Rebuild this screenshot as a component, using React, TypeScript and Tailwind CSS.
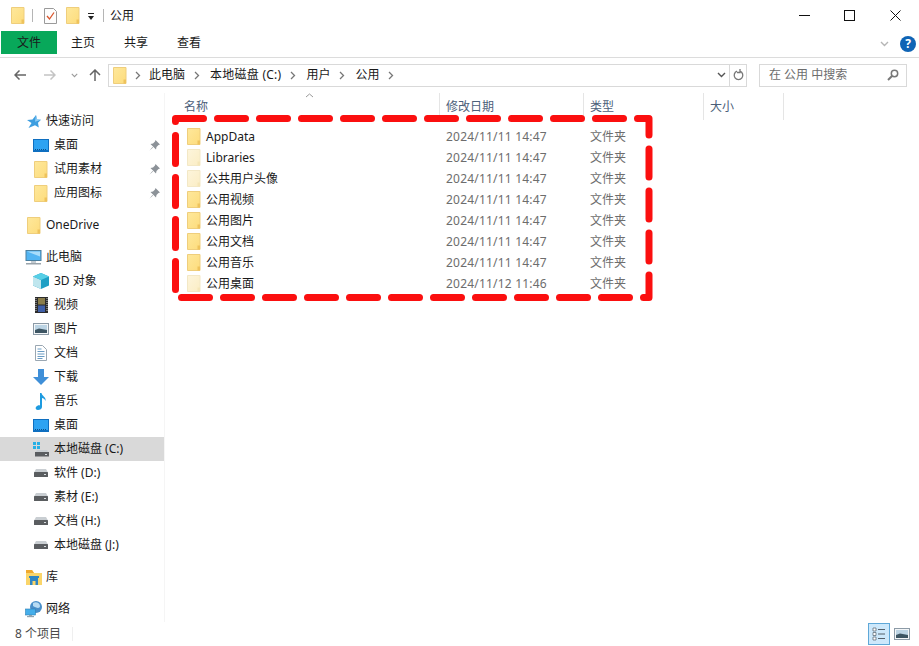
import type { ReactNode } from 'react';

const Folder = ({ pale = false }: { pale?: boolean }) => (
  <svg width="14" height="17" viewBox="0 0 14 17" className="shrink-0">
    <defs>
      <linearGradient id={pale ? 'folderPale' : 'folderSolid'} x1="0" y1="0" x2="1" y2="1">
        <stop offset="0" stopColor={pale ? '#fdf5dc' : '#fee89c'} />
        <stop offset="1" stopColor={pale ? '#fbedc4' : '#fddc7c'} />
      </linearGradient>
    </defs>
    <path d="M.5.5h12.500v16H.5z" fill={`url(#${pale ? 'folderPale' : 'folderSolid'})`} stroke={pale ? '#f3e8c6' : '#efce7c'} />
    <path d="M10.500 12.500h2.500v4h-2.500z" fill={pale ? '#f5e6b8' : '#eec35c'} />
  </svg>
);

const Desktop = () => (
  <svg width="16" height="13" viewBox="0 0 16 13">
    <rect width="16" height="13" fill="#0f6fc0" />
    <rect x="1" y="1" width="14" height="10" fill="#2ea3f2" />
    <path d="M2 10.500h12" stroke="#0b4f8a" strokeDasharray="1 1" />
  </svg>
);

const Monitor = () => (
  <svg width="17" height="15" viewBox="0 0 17 15">
    <rect x="1" y=".5" width="15" height="10" fill="#52b4f2" stroke="#4a7f9f" />
    <path d="M2 1.500h13v5z" fill="#a8dcfa" />
    <rect x="6" y="11" width="5" height="2" fill="#c3cbd1" />
    <rect x="1" y="13" width="15" height="1.500" fill="#9aa4ab" />
  </svg>
);

const Star = () => (
  <svg width="14" height="13" viewBox="0 0 14 13">
    <path d="M9 0l1 4.400 4 .4-3 3 .8 4.700L8 10.300 1.500 13l3-5L0 5l5.500-.4z" fill="#3d9ee0" />
    <path d="M9 0l1 4.400 4 .4-6 2z" fill="#8fcdf5" />
  </svg>
);

const Cube = () => (
  <svg width="16" height="16" viewBox="0 0 16 16">
    <path d="M8 0l8 3.500v9L8 16 0 12.500v-9z" fill="#1f9fc4" />
    <path d="M0 3.500L8 7v9L0 12.500z" fill="#bfe6ee" />
    <path d="M8 0l8 3.500L8 7 0 3.500z" fill="#57cfe6" />
  </svg>
);

const Film = () => (
  <svg width="13" height="16" viewBox="0 0 13 16">
    <rect width="13" height="16" fill="#2b2b2b" />
    <rect x="3" y="1" width="7" height="6.500" fill="#8a7d4a" />
    <rect x="3" y="8.500" width="7" height="6.500" fill="#3f5fa8" />
    <path d="M1 1v14M12 1v14" stroke="#c9c9c9" strokeDasharray="1 1" />
  </svg>
);

const Picture = () => (
  <svg width="16" height="12" viewBox="0 0 16 12">
    <rect x=".5" y=".5" width="15" height="11" fill="#f3f6f8" stroke="#8c9aa6" />
    <rect x="2" y="2" width="12" height="8" fill="#bcd4e4" />
    <path d="M2 7l4-1.500 8 1.500v3H2z" fill="#3d5563" />
  </svg>
);

const Doc = () => (
  <svg width="12" height="16" viewBox="0 0 12 16">
    <path d="M.5.5h7l4 4v11H.5z" fill="#fff" stroke="#9aa7b2" />
    <path d="M2.500 4h4M2.500 6.500h7M2.500 9h7M2.500 11.500h7M2.500 13.500h5" stroke="#6a9cc4" />
  </svg>
);

const Download = () => (
  <svg width="16" height="16" viewBox="0 0 16 16">
    <path d="M5 0h6v8h5l-8 8-8-8h5z" fill="#3f8fd8" />
  </svg>
);

const Music = () => (
  <svg width="12" height="17" viewBox="0 0 12 17">
    <path d="M5 0h1.500c.3 3 5 4 4 8-.5-2-2.500-3-3.500-3v9c0 2-2 3-4 3s-3-1.500-2-3 3-2 4-1.500z" fill="#1d9be0" />
  </svg>
);

const Hdd = () => (
  <svg width="14" height="8" viewBox="0 0 14 8">
    <path d="M2 0h10l2 3.500H0z" fill="#c9ced2" />
    <rect y="3" width="14" height="5" rx=".5" fill="#5a5d60" />
    <rect x="10" y="5" width="2" height="1" fill="#d8dde0" />
  </svg>
);

const SysDrive = () => (
  <svg width="16" height="16" viewBox="0 0 16 16">
    <path d="M0 1h3v3H0zM4 1h3v3H4zM0 5h3v3H0zM4 5h3v3H4z" fill="#27b0e6" />
    <path d="M4 9h10l2 3H2z" fill="#c9ced2" />
    <rect x="2" y="11" width="14" height="4.500" fill="#5a5d60" />
    <rect x="12" y="13" width="2" height="1" fill="#d8dde0" />
  </svg>
);

const Library = () => (
  <svg width="16" height="15" viewBox="0 0 16 15">
    <path d="M0 0h6l2 3h8v12H0z" fill="#fad56a" />
    <path d="M0 0h6l2 3H0z" fill="#f0a92e" />
    <path d="M3 6h10v2h-1v7H9.500v-4h-3v4H4V8H3z" fill="#2f86c4" />
  </svg>
);

const Network = () => (
  <svg width="17" height="17" viewBox="0 0 17 17">
    <circle cx="11" cy="6" r="6" fill="#4a8fc9" />
    <path d="M8 2c3-2 7 0 7 3s-4 2-7 0z" fill="#b9dcf3" />
    <rect x=".5" y="8" width="10" height="6" fill="#45aeea" stroke="#2c7fb5" strokeWidth=".6" />
    <rect x="4" y="14" width="3" height="1" fill="#8fa3b0" />
    <rect x="2" y="15" width="7" height="1.200" fill="#8fa3b0" />
  </svg>
);

const Pin = () => (
  <svg width="11" height="11" viewBox="0 0 11 11">
    <path d="M6.500 0L11 4.500l-1.500.5L7.500 7 7 9.500 1.500 4 4 3.500 6 1.500zM3.500 7L.5 10.500 4 7.500z" fill="#8c9298" />
  </svg>
);

const Crumb = () => (
  <svg width="6" height="9" viewBox="0 0 6 9" className="shrink-0">
    <path d="M1 1l3.500 3.500L1 8" fill="none" stroke="#777" strokeWidth="1.300" />
  </svg>
);

const Down = ({ color = '#777', small = false }: { color?: string; small?: boolean }) => (
  <svg width={small ? 7 : 9} height={small ? 5 : 6} viewBox="0 0 9 6" className="shrink-0">
    <path d="M1 1l3.500 3.500L8 1" fill="none" stroke={color} strokeWidth="1.400" />
  </svg>
);

const Row = ({ icon, label, pin, selected, indent }: { icon: ReactNode; label: string; pin?: boolean; selected?: boolean; indent?: boolean }) => (
  <div className={`flex h-6 items-center ${selected ? 'bg-[#d9d9d9]' : ''} ${indent ? 'pl-[33px]' : 'pl-[25px]'}`}>
    <span className={`flex h-4 items-center justify-center ${indent ? 'w-4' : 'w-[17px]'}`}>{icon}</span>
    <span className={`whitespace-nowrap ${indent ? 'ml-[5px]' : 'ml-1'}`}>{label}</span>
    {pin && (
      <span className="mr-[4px] ml-auto flex">
        <Pin />
      </span>
    )}
  </div>
);

const files = [
  ['AppData', '2024/11/11 14:47', false],
  ['Libraries', '2024/11/11 14:47', true],
  ['公共用户头像', '2024/11/11 14:47', true],
  ['公用视频', '2024/11/11 14:47', false],
  ['公用图片', '2024/11/11 14:47', false],
  ['公用文档', '2024/11/11 14:47', false],
  ['公用音乐', '2024/11/11 14:47', false],
  ['公用桌面', '2024/11/12 11:46', true],
] as const;

export default function App() {
  return (
    <div className="relative flex h-[646px] w-[919px] flex-col overflow-hidden bg-white font-['Noto_Sans','Noto_Sans_CJK_SC',sans-serif] text-[12px] leading-4 text-[#1a1a1a]">
      {/* title bar */}
      <div className="flex h-[31px] shrink-0 items-center pl-[11px]">
        <Folder />
        <span className="ml-[7px] h-[13px] w-px bg-[#b5b5b5]" />
        <svg width="13" height="16" viewBox="0 0 13 16" className="ml-[11px]">
          <path d="M.5.5h9l3 3v12H.5z" fill="#fdfdfd" stroke="#9a9a9a" />
          <path d="M3 8l2.500 3L10 4.500" fill="none" stroke="#d9542b" strokeWidth="1.300" />
        </svg>
        <span className="ml-[9px] flex">
          <Folder />
        </span>
        <svg width="8" height="8" viewBox="0 0 8 8" className="ml-[7px] mt-[3px]">
          <path d="M1 0h6v1H1zM1 3h6L4 7z" fill="#222" />
        </svg>
        <span className="ml-[8px] h-[13px] w-px bg-[#b5b5b5]" />
        <span className="ml-[6px]">公用</span>
        <div className="ml-auto flex items-center">
          <svg width="11" height="11" viewBox="0 0 11 11" className="mr-[34px]"><path d="M0 5.500h11" stroke="#111" /></svg>
          <svg width="11" height="11" viewBox="0 0 11 11" className="mr-[35px]"><rect x=".5" y=".5" width="10" height="10" fill="none" stroke="#111" /></svg>
          <svg width="11" height="11" viewBox="0 0 11 11" className="mr-[18px]"><path d="M.5.5l10 10M10.500.5l-10 10" stroke="#111" /></svg>
        </div>
      </div>

      {/* ribbon tabs */}
      <div className="flex h-[27px] shrink-0 border-b border-[#dcdcdc] pl-px">
        <div className="flex h-[23px] w-[56px] items-center justify-center bg-[#08a85a] pt-px">文件</div>
        <div className="ml-[14px] flex h-[23px] w-[24px] items-center justify-center pt-px">主页</div>
        <div className="ml-[29px] flex h-[23px] w-[24px] items-center justify-center pt-px">共享</div>
        <div className="ml-[29px] flex h-[23px] w-[24px] items-center justify-center pt-px">查看</div>
        <div className="mr-[3px] ml-auto flex h-[25px] items-center gap-[11px]">
          <Down color="#b5b5b5" />
          <span className="flex h-4 w-4 items-center justify-center rounded-full bg-[#0f64b5] text-[12px] font-bold text-white">?</span>
        </div>
      </div>

      {/* address row */}
      <div className="flex h-[35px] shrink-0 items-center pb-[1px]">
        <svg width="12" height="10" viewBox="0 0 12 10" className="ml-[14px]"><path d="M5.500.5L1 5l4.500 4.500M1 5h11" fill="none" stroke="#666" strokeWidth="1.500" /></svg>
        <svg width="12" height="10" viewBox="0 0 12 10" className="ml-[18px]"><path d="M6.500.5L11 5 6.500 9.500M11 5H0" fill="none" stroke="#c4c4c4" strokeWidth="1.500" /></svg>
        <span className="ml-[15px] flex"><Down color="#9a9a9a" small /></span>
        <svg width="12" height="12" viewBox="0 0 12 12" className="ml-[11px]"><path d="M1 6l5-5 5 5M6 1v11" fill="none" stroke="#666" strokeWidth="1.500" /></svg>
        <div className="ml-[7px] flex h-[23px] w-[639px] items-center border border-[#d9d9d9] pl-[4px]">
          <Folder />
          <span className="ml-[8px] flex"><Crumb /></span>
          <span className="ml-[8px]">此电脑</span>
          <span className="ml-[9px] flex"><Crumb /></span>
          <span className="ml-[10px] tracking-[0.25px]">本地磁盘 (C:)</span>
          <span className="ml-[9px] flex"><Crumb /></span>
          <span className="ml-[10px]">用户</span>
          <span className="ml-[9px] flex"><Crumb /></span>
          <span className="ml-[10px]">公用</span>
          <span className="ml-[9px] flex"><Crumb /></span>
          <span className="mr-[3px] ml-auto flex"><Down color="#555" /></span>
          <div className="flex h-full w-[17px] items-center justify-center border-l border-[#d9d9d9]">
            <svg width="11" height="12" viewBox="0 0 11 12"><path d="M7 2.200a4.300 4.300 0 1 1-3 0M7 0v3.500h-3" fill="none" stroke="#777" strokeWidth="1.300" /></svg>
          </div>
        </div>
        <div className="ml-[12px] flex h-[23px] w-[148px] items-center border border-[#d9d9d9] pr-[7px] pl-[9px] text-[#6d6d6d]">
          <span>在 公用 中搜索</span>
          <svg width="12" height="12" viewBox="0 0 12 12" className="ml-auto"><circle cx="7.500" cy="4.500" r="3.200" fill="none" stroke="#777" strokeWidth="1.500" /><path d="M5 7l-4 4" stroke="#777" strokeWidth="2" /></svg>
        </div>
      </div>

      {/* body */}
      <div className="flex min-h-0 flex-1">
        <nav className="w-[165px] shrink-0 border-r border-[#f5f5f5] pt-[16px]">
          <Row icon={<Star />} label="快速访问" />
          <Row indent icon={<Desktop />} label="桌面" pin />
          <Row indent icon={<Folder />} label="试用素材" pin />
          <Row indent icon={<Folder />} label="应用图标" pin />
          <div className="mt-2">
            <Row icon={<Folder />} label="OneDrive" />
          </div>
          <div className="mt-2">
            <Row icon={<Monitor />} label="此电脑" />
            <Row indent icon={<Cube />} label="3D 对象" />
            <Row indent icon={<Film />} label="视频" />
            <Row indent icon={<Picture />} label="图片" />
            <Row indent icon={<Doc />} label="文档" />
            <Row indent icon={<Download />} label="下载" />
            <Row indent icon={<Music />} label="音乐" />
            <Row indent icon={<Desktop />} label="桌面" />
            <Row indent selected icon={<SysDrive />} label="本地磁盘 (C:)" />
            <Row indent icon={<Hdd />} label="软件 (D:)" />
            <Row indent icon={<Hdd />} label="素材 (E:)" />
            <Row indent icon={<Hdd />} label="文档 (H:)" />
            <Row indent icon={<Hdd />} label="本地磁盘 (J:)" />
          </div>
          <div className="mt-2">
            <Row icon={<Library />} label="库" />
          </div>
          <div className="mt-2">
            <Row icon={<Network />} label="网络" />
          </div>
        </nav>

        <main className="min-w-0 flex-1">
          <div className="relative flex h-[27px] items-center text-[#4c607a]">
            <div className="flex h-full w-[275px] items-center border-r border-[#e5e5e5] pl-[19px]">名称</div>
            <div className="flex h-full w-[144px] items-center border-r border-[#e5e5e5] pl-[6px]">修改日期</div>
            <div className="flex h-full w-[120px] items-center border-r border-[#e5e5e5] pl-[6px]">类型</div>
            <div className="flex h-full w-[80px] items-center border-r border-[#e5e5e5] pl-[6px]">大小</div>
            <svg width="9" height="5" viewBox="0 0 9 5" className="absolute top-0 left-[140px]"><path d="M1 4l3.500-3L8 4" fill="none" stroke="#999" /></svg>
          </div>
          <div className="pt-[6px]">
            {files.map(([name, date, pale]) => (
              <div key={name} className="flex h-[21px] items-center">
                <div className="flex w-[274px] items-center pl-[22px]">
                  <Folder pale={pale} />
                  <span className="ml-[5px]">{name}</span>
                </div>
                <div className="w-[144px] pl-[7px] tracking-[0.2px] text-[#6d6d6d]">{date}</div>
                <div className="pl-[7px] text-[#6d6d6d]">文件夹</div>
              </div>
            ))}
          </div>
        </main>
      </div>

      {/* status bar */}
      <div className="flex h-[24px] shrink-0 items-center pl-[15px] text-[#4a4a4a]">
        <span>8 个项目</span>
        <span className="ml-[11px] h-[14px] w-px bg-[#efefef]" />
        <div className="mr-[9px] ml-auto flex items-center gap-[4px]">
          <span className="flex h-[22px] w-[22px] items-center justify-center border border-[#5fa8d8] bg-[#cde8fb]">
            <svg width="14" height="14" viewBox="0 0 14 14">
              <path d="M1 1h3v3H1zM1 5.500h3v3H1zM1 10h3v3H1z" fill="#fff" stroke="#55606a" strokeWidth=".7" />
              <path d="M6 2.500h7M6 7h7M6 11.500h7" stroke="#55606a" />
            </svg>
          </span>
          <Picture />
        </div>
      </div>

      {/* red dashed annotation */}
      <svg width="919" height="646" viewBox="0 0 919 646" className="pointer-events-none absolute inset-0">
        <path d="M175.500 118.500H649V297.500H175.500Z" fill="none" stroke="#fb0f0f" strokeWidth="7" strokeLinecap="round" strokeLinejoin="round" strokeDasharray="28 14" />
      </svg>
    </div>
  );
}
